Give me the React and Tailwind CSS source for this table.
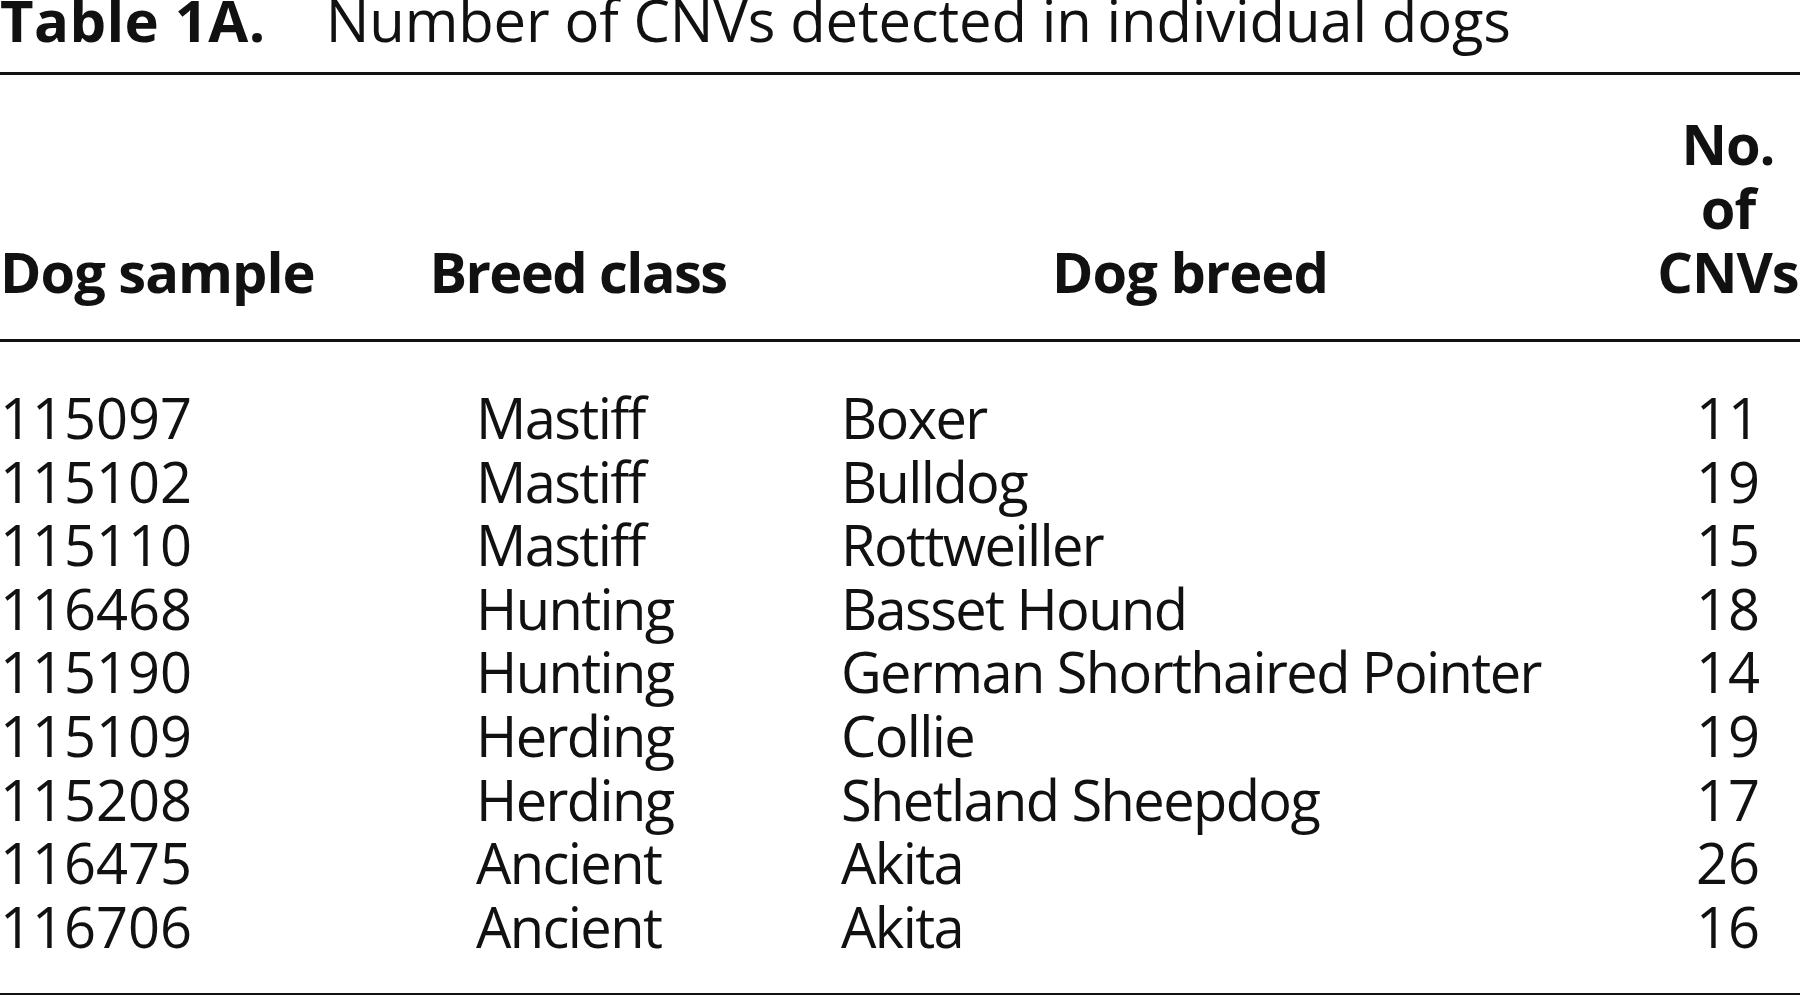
import React from "react";

const rows = [
  ["115097", "Mastiff", "Boxer", "11"],
  ["115102", "Mastiff", "Bulldog", "19"],
  ["115110", "Mastiff", "Rottweiller", "15"],
  ["116468", "Hunting", "Basset Hound", "18"],
  ["115190", "Hunting", "German Shorthaired Pointer", "14"],
  ["115109", "Herding", "Collie", "19"],
  ["115208", "Herding", "Shetland Sheepdog", "17"],
  ["116475", "Ancient", "Akita", "26"],
  ["116706", "Ancient", "Akita", "16"],
];

export default function App() {
  return (
    <div
      className="w-[1800px] h-[995px] bg-white text-[#111] overflow-hidden"
      style={{ fontFamily: '"Open Sans", "Noto Sans", sans-serif' }}
    >
      <div className="h-[75px] border-b-[3px] border-[#111] text-[58px] leading-[40px] whitespace-nowrap">
        <span className="font-bold tracking-[0.4px]">Table 1A.</span>
        <span className="ml-[60px] tracking-[-0.15px]">Number of CNVs detected in individual dogs</span>
      </div>

      <table className="w-[1800px] border-collapse table-fixed text-[56px]">
        <colgroup>
          <col className="w-[380px]" />
          <col className="w-[396px]" />
          <col className="w-[880px]" />
          <col className="w-[144px]" />
        </colgroup>
        <thead>
          <tr className="border-b-[3px] border-[#111] leading-[64px]">
            <th className="text-left align-bottom pt-[36px] pb-[36px] whitespace-nowrap font-bold tracking-[-1px]">
              Dog sample
            </th>
            <th className="text-center align-bottom pt-[36px] pb-[36px] whitespace-nowrap font-bold tracking-[-1.6px]">
              Breed class
            </th>
            <th className="text-center align-bottom pt-[36px] pb-[36px] pr-[52px] whitespace-nowrap font-bold tracking-[-1px]">
              Dog breed
            </th>
            <th className="text-center align-bottom pt-[36px] pb-[36px] font-bold tracking-[-1px]">
              <div>No.</div>
              <div>of</div>
              <div>CNVs</div>
            </th>
          </tr>
        </thead>
        <tbody className="leading-[63.6px]">
          {rows.map((r, i) => {
            const first = i === 0;
            const last = i === rows.length - 1;
            const pad = `${first ? "pt-[44px]" : ""} ${last ? "pb-[35px]" : ""}`;
            return (
              <tr key={i}>
                <td className={`text-left whitespace-nowrap ${pad}`}>{r[0]}</td>
                <td className={`pl-[96px] whitespace-nowrap tracking-[-1.6px] ${pad}`}>{r[1]}</td>
                <td className={`pl-[65px] whitespace-nowrap tracking-[-1.6px] ${pad}`}>{r[2]}</td>
                <td className={`text-center whitespace-nowrap ${pad}`}>{r[3]}</td>
              </tr>
            );
          })}
        </tbody>
        <tfoot>
          <tr className="border-t-[3px] border-[#111]">
            <td colSpan={4} />
          </tr>
        </tfoot>
      </table>
    </div>
  );
}
